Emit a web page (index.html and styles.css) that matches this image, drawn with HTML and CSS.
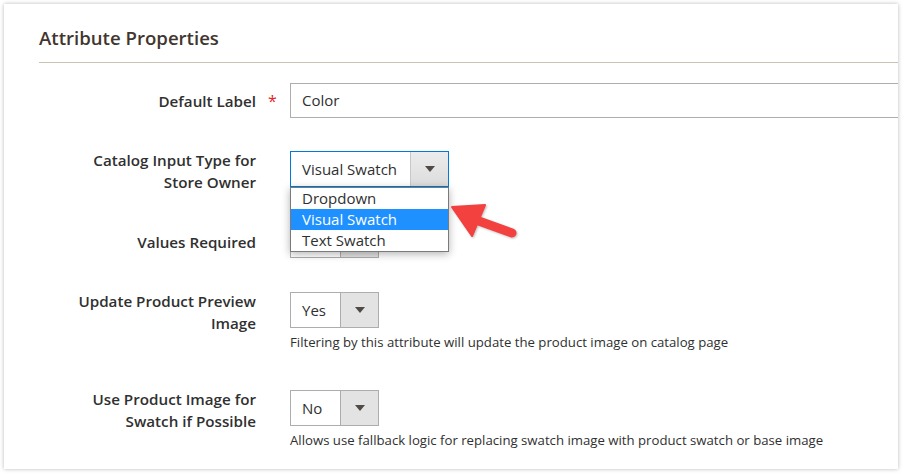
FILE: index.html
```html
<!DOCTYPE html>
<html lang="en">
<head>
  <meta charset="UTF-8">
  <title>Attribute Properties</title>
  <link rel="stylesheet" href="styles.css">
</head>
<body>
  <section class="card">
    <h2 class="title">Attribute Properties</h2>

    <div class="form">
      <!-- Default Label -->
      <div class="row row-center row-first">
        <label class="label">Default Label</label>
        <span class="mark">*</span>
        <div class="field">
          <div class="input">Color</div>
        </div>
      </div>

      <!-- Catalog Input Type -->
      <div class="row row-open">
        <label class="label label-multi">Catalog Input Type for Store Owner</label>
        <span class="mark"></span>
        <div class="field">
          <div class="select-wrap">
            <div class="select select-wide focused">
              <span class="value">Visual Swatch</span>
              <span class="btn"><i class="caret"></i></span>
            </div>
            <ul class="options">
              <li>Dropdown</li>
              <li class="active">Visual Swatch</li>
              <li>Text Swatch</li>
            </ul>
            <svg class="pointer" width="85" height="55" viewBox="0 0 85 55">
              <g fill="#f2413f" stroke="#f2413f" stroke-linejoin="round">
                <polygon points="12,16 45,14 32,45" stroke-width="2"/>
                <line x1="36" y1="29" x2="72" y2="42" stroke-width="9" stroke-linecap="round"/>
              </g>
            </svg>
          </div>
        </div>
      </div>

      <!-- Values Required -->
      <div class="row row-center">
        <label class="label label-low">Values Required</label>
        <span class="mark"></span>
        <div class="field">
          <div class="select">
            <span class="value">No</span>
            <span class="btn"><i class="caret"></i></span>
          </div>
        </div>
      </div>

      <!-- Update Product Preview Image -->
      <div class="row">
        <label class="label label-multi">Update Product Preview Image</label>
        <span class="mark"></span>
        <div class="field">
          <div class="select">
            <span class="value">Yes</span>
            <span class="btn"><i class="caret"></i></span>
          </div>
          <p class="note">Filtering by this attribute will update the product image on catalog page</p>
        </div>
      </div>

      <!-- Use Product Image -->
      <div class="row row-last">
        <label class="label label-multi">Use Product Image for Swatch if Possible</label>
        <span class="mark"></span>
        <div class="field">
          <div class="select">
            <span class="value">No</span>
            <span class="btn"><i class="caret"></i></span>
          </div>
          <p class="note">Allows use fallback logic for replacing swatch image with product swatch or base image</p>
        </div>
      </div>
    </div>
  </section>
</body>
</html>
```

FILE: styles.css
```css
html, body {
  margin: 0;
  padding: 0;
  background: #fff;
  font-family: 'Open Sans', 'Noto Sans', sans-serif;
  color: #303030;
}

.card {
  margin: 4px 6px 5px 4px;
  height: 465px;
  box-sizing: border-box;
  padding: 0 0 0 35px;
  background: #fff;
  overflow: hidden;
  box-shadow: 0 0 4px rgba(0, 0, 0, 0.28);
}

.title {
  margin: 0;
  padding: 20px 0 10px;
  font-size: 18.6px;
  line-height: 28px;
  font-weight: 600;
  color: #41362f;
  border-bottom: 1px solid #cac3b4;
}

.form {
  padding-top: 20px;
}

.row {
  display: flex;
  align-items: flex-start;
  margin-bottom: 34px;
}

.row-center {
  align-items: center;
}

.row-first {
  margin-bottom: 33px;
}

.row-open {
  margin-bottom: 35px;
}

.row-last {
  margin-bottom: 0;
}

.label {
  flex-shrink: 0;
  width: 217px;
  box-sizing: border-box;
  padding-left: 21px;
  text-align: right;
  font-size: 15.2px;
  line-height: 22px;
  font-weight: 600;
  color: #303030;
}

.label-multi {
  margin: -2px 0 -8px;
}

.label-low {
  padding-top: 4px;
}

.mark {
  flex-shrink: 0;
  width: 34px;
  box-sizing: border-box;
  padding-left: 12px;
  color: #e22626;
  font-size: 16px;
  line-height: 22px;
}

.field {
  display: flex;
  flex-direction: column;
  align-items: flex-start;
}

.input {
  width: 640px;
  height: 35px;
  box-sizing: border-box;
  border: 1px solid #adadad;
  padding: 0 11px;
  font-size: 15px;
  line-height: 33px;
}

.select {
  display: flex;
  height: 36px;
  box-sizing: border-box;
  border: 1px solid #adadad;
  background: #fff;
  font-size: 15px;
  line-height: 34px;
}

.select .value {
  width: 49px;
  box-sizing: border-box;
  padding-left: 11px;
}

.select-wide .value {
  width: 119px;
}

.select .btn {
  width: 37px;
  display: flex;
  align-items: center;
  justify-content: center;
  background: #e3e3e3;
  border-left: 1px solid #adadad;
}

.select.focused {
  border-color: #007bdb;
}

.select.focused .btn {
  background: linear-gradient(#ececec, #dcdcdc);
  border-left-color: #c8c8c8;
}

.caret {
  width: 0;
  height: 0;
  border-left: 5px solid transparent;
  border-right: 5px solid transparent;
  border-top: 6px solid #514943;
}

.select-wrap {
  position: relative;
}

.options {
  position: absolute;
  top: 36px;
  left: 0;
  width: 159px;
  box-sizing: border-box;
  margin: 0;
  padding: 0;
  list-style: none;
  background: #fff;
  border: 1px solid #7a7a7a;
  box-shadow: 0 2px 8px rgba(0, 0, 0, 0.3);
  font-size: 15px;
  line-height: 21px;
  z-index: 2;
}

.options li {
  padding-left: 11px;
}

.options li.active {
  background: #1e90ff;
  color: #fff;
}

.pointer {
  position: absolute;
  left: 150px;
  top: 40px;
  z-index: 3;
  filter: drop-shadow(1px 1px 1px rgba(0, 0, 0, 0.25));
}

.note {
  margin: 5px 0 5px;
  font-size: 13.2px;
  line-height: 18px;
  color: #303030;
}
```
